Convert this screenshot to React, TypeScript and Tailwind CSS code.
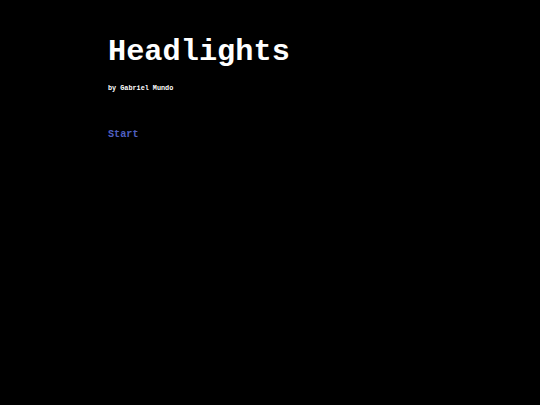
export default function App() {
  return (
    <div className="min-h-[405px] w-full bg-black pl-[108px] pt-[35px]" style={{ fontFamily: '"Liberation Mono", monospace' }}>
      <h1 className="text-[30.3px] font-bold leading-[34px] text-white">Headlights</h1>
      <p className="mt-[15px] text-[6.8px] font-bold leading-[8px] text-white">by Gabriel Mundo</p>
      <div className="mt-[29px]">
        <a className="text-[10.2px] font-bold leading-[12px] text-[#4f5fc0] cursor-pointer">Start</a>
      </div>
    </div>
  );
}
